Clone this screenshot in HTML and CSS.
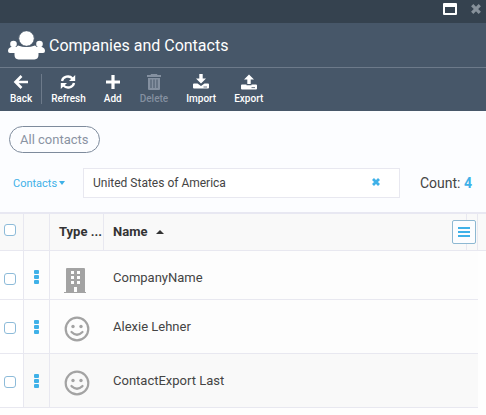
FILE: index.html
```html
<!DOCTYPE html>
<html lang="en">
<head>
<meta charset="utf-8">
<title>Companies and Contacts</title>
<link rel="stylesheet" href="styles.css">
</head>
<body>
<div class="titlebar">
  <button class="window-btn" type="button" aria-label="Maximize">
    <svg width="14" height="12" viewBox="0 0 14 12"><path fill="#fff" fill-rule="evenodd" d="M1 0h12a1 1 0 0 1 1 1v10a1 1 0 0 1-1 1H1a1 1 0 0 1-1-1V1a1 1 0 0 1 1-1zM2 4v6h10V4z"/></svg>
  </button>
  <button class="window-btn" type="button" aria-label="Close">
    <svg width="10" height="10" viewBox="0 0 10 10"><path stroke="#87919b" stroke-width="3.2" d="M1.2 1.2l7.6 7.6M8.800 1.200l-7.600 7.600"/></svg>
  </button>
</div>
<header class="header">
  <svg width="37" height="29" viewBox="0 0 37 29" fill="#fff" aria-hidden="true">
    <circle cx="5.500" cy="13" r="3.300"/><circle cx="31.500" cy="13" r="3.300"/>
    <path d="M3 16h8l-3 6H2q-2 0-2-2 0-3 3-4zM34 16h-8l3 6h6q2 0 2-2 0-3-3-4z"/>
    <path d="M10 14.500q8.500 3 17 0 3 1.500 3.500 5V24q0 4-4 4.500h-16q-4-.5-4-4.500v-4.500q.5-3.500 3.500-5z"/>
    <circle cx="18.500" cy="7.500" r="7.800" stroke="#475769"/>
  </svg>
  <h1 class="title">Companies and Contacts</h1>
</header>
<nav class="toolbar">
  <button class="tool" type="button">
    <svg width="16" height="16" viewBox="0 0 16 16" fill="none" stroke="#fff" stroke-width="2.600"><path d="M8.500 2L2.500 8l6 6M3 8h12"/></svg>
    <span>Back</span>
  </button>
  <span class="divider"></span>
  <button class="tool" type="button">
    <svg width="16" height="16" viewBox="0 0 16 16" fill="none" stroke="#fff" stroke-width="2.300"><path d="M2 7a6 5.500 0 0 1 10.500-2.500M14 9a6 5.500 0 0 1-10.500 2.500"/><path fill="#fff" stroke="none" d="M15.200 1v6H9zM.8 15V9H7z"/></svg>
    <span>Refresh</span>
  </button>
  <button class="tool" type="button">
    <svg width="16" height="16" viewBox="0 0 16 16" stroke="#fff" stroke-width="3.200"><path d="M8 1v14M1 8h14"/></svg>
    <span>Add</span>
  </button>
  <button class="tool" type="button" disabled>
    <svg width="16" height="16" viewBox="0 0 16 16"><path fill="#8490a0" fill-rule="evenodd" d="M5 0h6l.5 1H15v2H1V1h3.500zM2 4h12v11q0 1-1 1H3q-1 0-1-1zM4.500 5.500v8.500h1V5.500zM7.500 5.500v8.500h1V5.500zM10.500 5.500v8.500h1V5.500z"/></svg>
    <span>Delete</span>
  </button>
  <button class="tool" type="button">
    <svg width="16" height="16" viewBox="0 0 16 16" fill="#fff"><path d="M6.300 0h3.400v4.500H13l-5 5-5-5h3.300z"/><path d="M1 9.500h3.500L8 12l3.500-2.500H15q1 0 1 1v3q0 1-1 1H1q-1 0-1-1v-3q0-1 1-1z"/><path stroke="#475769" stroke-width=".8" d="M10.500 13h3.500"/></svg>
    <span>Import</span>
  </button>
  <button class="tool" type="button">
    <svg width="16" height="16" viewBox="0 0 16 16" fill="#fff"><path d="M6.300 10h3.400V5.500H13l-5-5-5 5h3.300z"/><path d="M1 10.500h4.500v.7h5v-.7H15q1 0 1 1v3q0 1-1 1H1q-1 0-1-1v-3q0-1 1-1z"/><path stroke="#475769" stroke-width=".8" d="M10.500 13.600h3.500"/></svg>
    <span>Export</span>
  </button>
</nav>
<main>
  <button class="pill" type="button">All contacts</button>
  <form class="filter">
    <button class="scope" type="button">Contacts
      <svg width="6" height="4" viewBox="0 0 6 4"><path fill="#3fb1e8" d="M0 0h6L3 4z"/></svg>
    </button>
    <div class="search">
      <input class="search-input" type="text" aria-label="Search contacts" value="United States of America">
      <button class="clear" type="button" aria-label="Clear search">
        <svg width="8" height="8" viewBox="0 0 8 8"><path stroke="#3fb1e8" stroke-width="2.800" d="M1 1l6 6M7 1L1 7"/></svg>
      </button>
    </div>
    <p class="count">Count: <b>4</b></p>
  </form>
  <div class="grid">
    <table class="contacts">
      <colgroup><col class="c-check"><col class="c-menu"><col class="c-type"><col><col class="c-pad"><col class="c-scroll"></colgroup>
      <thead>
        <tr>
          <th><input class="check" type="checkbox" aria-label="Select all"></th>
          <th></th>
          <th class="type-head">Type ...</th>
          <th class="name">Name <svg class="sort" width="8" height="4" viewBox="0 0 8 4"><path fill="#333" d="M0 4h8L4 0z"/></svg></th>
          <th></th>
          <th></th>
        </tr>
      </thead>
      <tbody>
        <tr class="row-company">
          <td><input class="check" type="checkbox" aria-label="Select CompanyName"></td>
          <td><button class="dots" type="button" aria-label="Actions"><i></i><i></i><i></i></button></td>
          <td class="type"><svg width="24" height="25" viewBox="0 0 24 25"><path fill="#a3a3a3" fill-rule="evenodd" d="M3 0h17q1 0 1 1v23h1v1H0v-1h2V1q0-1 1-1zM7 3v3h3V3zM13 3v3h3V3zM7 8v3h3V8zM13 8v3h3V8zM7 13v3h3v-3zM13 13v3h3v-3zM10 19v5h3v-5z"/></svg></td>
          <td class="name">CompanyName</td>
          <td></td>
          <td></td>
        </tr>
        <tr>
          <td><input class="check" type="checkbox" aria-label="Select Alexie Lehner"></td>
          <td><button class="dots" type="button" aria-label="Actions"><i></i><i></i><i></i></button></td>
          <td class="type"><svg width="26" height="26" viewBox="0 0 26 26"><g fill="none" stroke="#a3a3a3" stroke-width="2.200"><circle cx="13" cy="13" r="11.300"/><path stroke-linecap="round" d="M7.500 16q5.500 5.500 11 0"/></g><g fill="#a3a3a3"><circle cx="9" cy="10.500" r="1.700"/><circle cx="17" cy="10.500" r="1.700"/></g></svg></td>
          <td class="name">Alexie Lehner</td>
          <td></td>
          <td></td>
        </tr>
        <tr class="shaded">
          <td><input class="check" type="checkbox" aria-label="Select ContactExport Last"></td>
          <td><button class="dots" type="button" aria-label="Actions"><i></i><i></i><i></i></button></td>
          <td class="type"><svg width="26" height="26" viewBox="0 0 26 26"><g fill="none" stroke="#a3a3a3" stroke-width="2.200"><circle cx="13" cy="13" r="11.300"/><path stroke-linecap="round" d="M7.500 16q5.500 5.500 11 0"/></g><g fill="#a3a3a3"><circle cx="9" cy="10.500" r="1.700"/><circle cx="17" cy="10.500" r="1.700"/></g></svg></td>
          <td class="name">ContactExport Last</td>
          <td></td>
          <td></td>
        </tr>
      </tbody>
    </table>
    <button class="columns" type="button" aria-label="Columns">
      <svg width="12" height="10" viewBox="0 0 12 10"><path fill="#3fb1e8" d="M0 0h12v2H0zM0 4h12v2H0zM0 8h12v2H0z"/></svg>
    </button>
  </div>
</main>
</body>
</html>
```
FILE: styles.css
```css
* { box-sizing: border-box; }

body {
  margin: 0;
  background: #fefefe;
  color: #444;
  font-family: Roboto, "Liberation Sans", sans-serif;
  font-size: 13px;
}

button {
  margin: 0;
  padding: 0;
  border: 0;
  background: none;
  font: inherit;
}

svg { display: block; flex: none; }

.titlebar {
  display: flex;
  justify-content: flex-end;
  gap: 14px;
  height: 23px;
  padding: 3px 5px 0 0;
  background: #35424f;
}

.window-btn {
  display: flex;
  align-items: center;
  height: 12px;
}

.header {
  display: flex;
  align-items: center;
  gap: 4px;
  height: 45px;
  padding: 0 8px;
  background: #475769;
  border-bottom: 1px solid #6d7a8a;
}

.title {
  margin: 0;
  color: #fff;
  font-size: 16px;
  font-weight: 400;
}

.toolbar {
  display: flex;
  gap: 18px;
  height: 43px;
  padding: 6px 10px 0;
  background: #475769;
}

.tool {
  display: flex;
  flex-direction: column;
  align-items: center;
  gap: 3px;
  color: #fff;
  font-size: 10px;
  font-weight: 500;
  line-height: 12px;
}

.tool:disabled { color: #8490a0; }

.divider {
  width: 1px;
  height: 30px;
  margin: 0 -9px;
  background: #6d7a8a;
}

main {
  padding-top: 15px;
  background: #fcfdff;
}

.pill {
  display: block;
  height: 27px;
  margin-left: 9px;
  padding: 0 10px;
  border: 1px solid #7e8b9c;
  border-radius: 14px;
  color: #8a93a3;
  font-size: 13px;
}

.filter {
  display: flex;
  align-items: center;
  margin: 15px 14px 14px 13px;
}

.scope {
  display: flex;
  align-items: center;
  gap: 2px;
  width: 70px;
  color: #3fb1e8;
  font-size: 11px;
}

.search {
  display: flex;
  flex: 1;
  align-items: center;
  height: 30px;
  padding: 0 19px 0 9px;
  border: 1px solid #e8e8f0;
  background: #fff;
}

.search-input {
  flex: 1;
  min-width: 0;
  padding: 0;
  border: 0;
  outline: 0;
  background: none;
  color: #444;
  font: inherit;
  font-size: 12px;
}

.clear { padding-bottom: 2px; }

.count {
  margin: 0 0 0 20px;
  font-size: 14px;
}

.count b { color: #3fb1e8; }

.grid { position: relative; background: #fefefe; }

.contacts {
  width: 100%;
  border-spacing: 0;
  border-top: 2px solid #e8e8f2;
  table-layout: fixed;
}

.c-check { width: 24px; }
.c-menu { width: 26px; }
.c-type { width: 54px; }
.c-pad { width: 11px; }
.c-scroll { width: 8px; }

th, td {
  padding: 0;
  border-bottom: 1px solid #e8e8f0;
  text-align: left;
  white-space: nowrap;
}

th {
  height: 37px;
  padding-bottom: 2px;
  border-right: 1px solid #e8e8f0;
  background: #f9f9f9;
  color: #333;
  font-size: 13px;
  font-weight: 700;
}

th:first-child { padding-bottom: 4px; }
th:last-child { border-right: 0; }

td { height: 54px; background: #fdfdfd; }

.row-company td { height: 49px; padding-top: 4px; }
.shaded td { background: #f9f9f9; }

td:first-child, .shaded td:first-child { padding-top: 2px; background: #fff; }
.row-company td:first-child { padding-top: 8px; }
td:nth-child(-n+2) { border-right: 1px solid #e8e8f0; }
td:last-child, .shaded td:last-child { border-bottom: 0; background: #fefefe; }

.type-head { padding-left: 9px; }
.type { padding: 4px 0 0 14px; }
.row-company .type { padding-top: 11px; }
.name { padding-left: 9px; }

.sort { display: inline-block; margin-left: 5px; vertical-align: 2px; }

.check {
  display: block;
  appearance: none;
  width: 12px;
  height: 12px;
  margin: 0 0 0 4px;
  border: 1px solid #8dbbd9;
  border-radius: 3px;
  background: #fff;
}

.dots {
  display: flex;
  flex-direction: column;
  gap: 1px;
  margin-left: 10px;
}

.dots i {
  width: 5px;
  height: 4px;
  border-radius: 1px;
  background: #3fb1e8;
}

.columns {
  position: absolute;
  top: 8px;
  right: 10px;
  display: grid;
  place-items: center;
  width: 24px;
  height: 24px;
  border: 1px solid #8db8d2;
  border-radius: 2px;
  background: #fcfdff;
}
```
